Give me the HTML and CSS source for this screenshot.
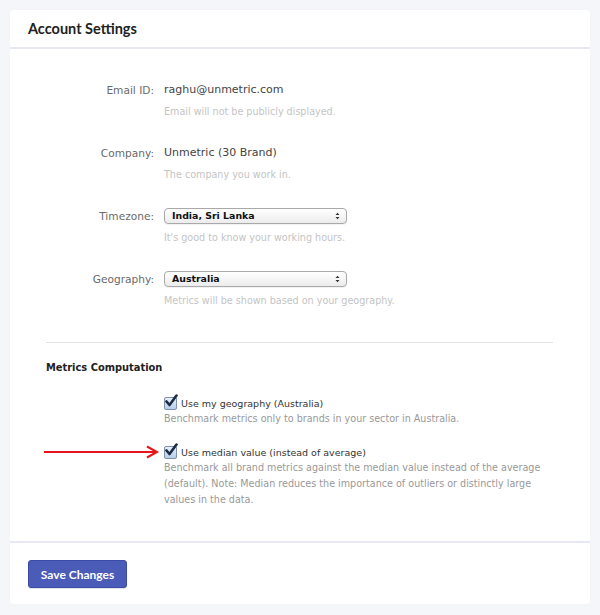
FILE: index.html
```html
<!DOCTYPE html>
<html>
<head>
<meta charset="utf-8">
<link rel="stylesheet" href="styles.css">
</head>
<body>
<div class="card">
  <div class="card-header"><h1 class="title">Account Settings</h1></div>
  <div class="card-body">
    <div class="form-row">
      <div class="label">Email ID:</div>
      <div class="field">
        <div class="value">raghu@unmetric.com</div>
        <div class="help">Email will not be publicly displayed.</div>
      </div>
    </div>
    <div class="form-row">
      <div class="label">Company:</div>
      <div class="field">
        <div class="value">Unmetric (30 Brand)</div>
        <div class="help">The company you work in.</div>
      </div>
    </div>
    <div class="form-row">
      <div class="label">Timezone:</div>
      <div class="field">
        <div class="value"><div class="select"><span>India, Sri Lanka</span><svg class="sel-arrows" width="5" height="8" viewBox="0 0 5 8"><path d="M0.5 3 L2.5 0.8 L4.5 3 Z M0.5 5 L2.5 7.2 L4.5 5 Z" fill="#333"/></svg></div></div>
        <div class="help">It's good to know your working hours.</div>
      </div>
    </div>
    <div class="form-row">
      <div class="label">Geography:</div>
      <div class="field">
        <div class="value"><div class="select"><span>Australia</span><svg class="sel-arrows" width="5" height="8" viewBox="0 0 5 8"><path d="M0.5 3 L2.5 0.8 L4.5 3 Z M0.5 5 L2.5 7.2 L4.5 5 Z" fill="#333"/></svg></div></div>
        <div class="help">Metrics will be shown based on your geography.</div>
      </div>
    </div>
    <hr class="divider">
    <h2 class="section-title">Metrics Computation</h2>
    <div class="check-row">
      <div class="check-line">
        <span class="checkbox"><svg width="14" height="14" viewBox="0 0 14 14"><path d="M2.5 7.5 L5.5 11 L12.5 1.5" fill="none" stroke="#1b2a45" stroke-width="2.6" stroke-linecap="round" stroke-linejoin="round"/></svg></span>
        <span class="check-label">Use my geography (Australia)</span>
      </div>
      <div class="check-help">Benchmark metrics only to brands in your sector in Australia.</div>
    </div>
    <div class="check-row second">
      <svg class="annot-arrow" width="116" height="14" viewBox="0 0 116 14"><path d="M0 7 H113 M103 1.5 L113 7 L103 12.5" fill="none" stroke="#e8141b" stroke-width="2"/></svg>
      <div class="check-line">
        <span class="checkbox"><svg width="14" height="14" viewBox="0 0 14 14"><path d="M2.5 7.5 L5.5 11 L12.5 1.5" fill="none" stroke="#1b2a45" stroke-width="2.6" stroke-linecap="round" stroke-linejoin="round"/></svg></span>
        <span class="check-label">Use median value (instead of average)</span>
      </div>
      <div class="check-help">Benchmark all brand metrics against the median value instead of the average (default). Note: Median reduces the importance of outliers or distinctly large values in the data.</div>
    </div>
  </div>
  <div class="card-footer">
    <button class="btn-primary">Save Changes</button>
  </div>
</div>
</body>
</html>
```

FILE: styles.css
```css
html, body {
  margin: 0;
  padding: 0;
  background: #f5f6fa;
}
body {
  padding: 10px;
  font-family: "DejaVu Sans", sans-serif;
}
.card {
  background: #fff;
  border-radius: 3px;
  box-shadow: 0 0 1px rgba(0,0,0,0.06);
  width: 580px;
}
.card-header {
  height: 37px;
  display: flex;
  align-items: center;
  padding-left: 18px;
  border-bottom: 2px solid #e8e8f5;
}
.title {
  margin: 0;
  font-family: "Lato", sans-serif;
  font-weight: 700;
  font-size: 14.5px;
  color: #222;
}
.card-body {
  padding: 31px 37px 33px 36px;
}
.form-row {
  display: grid;
  grid-template-columns: 108px 1fr;
  column-gap: 10px;
  margin-bottom: 23px;
}
.label {
  text-align: right;
  font-size: 10.6px;
  line-height: 20px;
  color: #6a6a6a;
}
.value {
  font-size: 11px;
  line-height: 20px;
  height: 20px;
  color: #444;
  display: flex;
  align-items: center;
}
.help {
  margin-top: 4px;
  font-size: 9.6px;
  line-height: 16px;
  color: #c4c4c4;
}
.select {
  width: 168px;
  height: 14px;
  border: 1px solid #a9a9a9;
  border-radius: 4px;
  background: linear-gradient(#ffffff, #ececec);
  display: flex;
  align-items: center;
  justify-content: space-between;
  padding: 0 6px 0 7px;
  box-sizing: content-box;
  font-size: 9.4px;
  font-weight: 700;
  color: #111;
  box-shadow: 0 1px 0 rgba(0,0,0,0.05);
}
.sel-arrows {
  display: block;
}
.divider {
  border: 0;
  border-top: 1px solid #e3e3e3;
  margin: 33px 0 0 0;
}
.section-title {
  margin: 15px 0 0 0;
  font-size: 9.9px;
  line-height: 20px;
  font-weight: 700;
  color: #222;
}
.check-row {
  position: relative;
  margin: 17px 0 0 118px;
}
.check-row.second {
  margin-top: 17px;
}
.check-line {
  display: flex;
  align-items: center;
  height: 16px;
}
.checkbox {
  width: 11px;
  height: 11px;
  border: 1px solid #8090a8;
  border-radius: 2px;
  background: linear-gradient(#e6f0fb, #b6cde8);
  margin-right: 4px;
  position: relative;
  flex: none;
}
.checkbox svg {
  position: absolute;
  left: -1px;
  top: -4px;
}
.check-label {
  font-size: 9.5px;
  color: #333;
}
.check-help {
  width: 378px;
  font-size: 9.6px;
  line-height: 16px;
  color: #999;
}
.annot-arrow {
  position: absolute;
  left: -120px;
  top: 1px;
}
.card-footer {
  border-top: 2px solid #e8e8f5;
  padding: 17px 18px 16px 18px;
}
.btn-primary {
  width: 99px;
  height: 28px;
  background: #4a5bb8;
  border: 1px solid #3c4ca6;
  border-radius: 3px;
  color: #fff;
  font-family: "Lato", sans-serif;
  font-weight: 700;
  font-size: 12px;
  padding: 0;
  box-shadow: 0 1px 1px rgba(0,0,0,0.12);
}
```
